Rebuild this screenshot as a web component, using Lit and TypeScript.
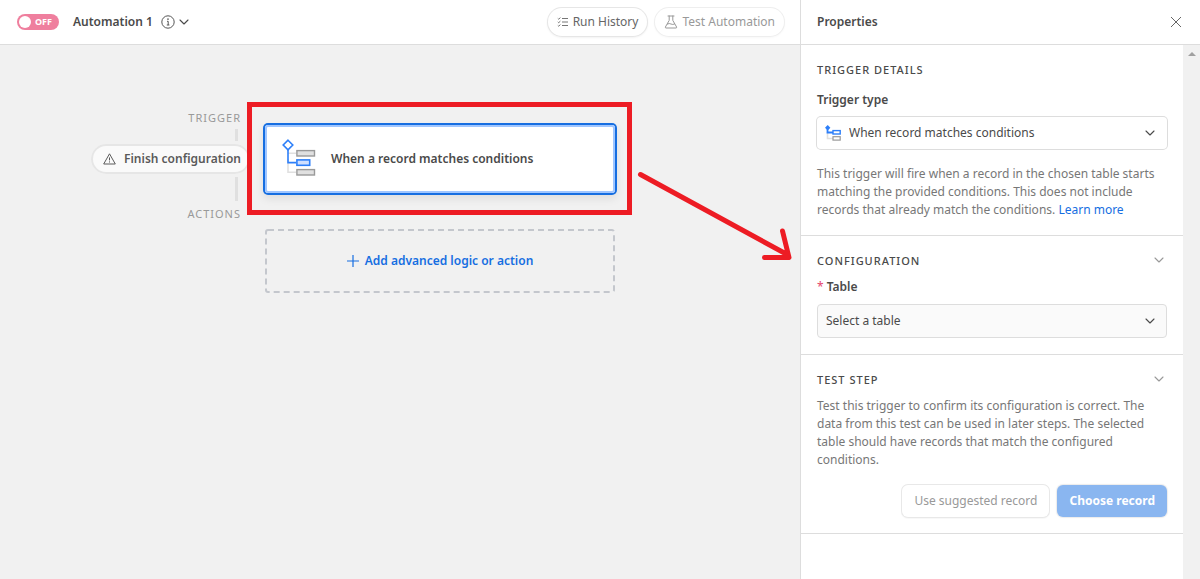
import { LitElement, html, css, svg } from "lit";
import { customElement, property, state } from "lit/decorators.js";

const chevron = html`<svg class="chevron" width="10" height="6" viewBox="0 0 10 6" fill="none" stroke="currentColor" stroke-width="1.1" stroke-linecap="round" stroke-linejoin="round" aria-hidden="true"><path d="M1 1l4 4 4-4" /></svg>`;

const matchIconLarge = svg`<svg width="36" height="40" viewBox="0 -0.3 36 40" fill="none" aria-hidden="true">
  <path d="M6 20V33H14M6 14H14" stroke="#e0e0e0" stroke-width="1.6" />
  <path d="M6 10V23.300H14" stroke="#2d7ff9" stroke-width="1.6" />
  <path d="M6 .9L10.800 5.700 6 10.500 1.200 5.700z" fill="#fff" stroke="#2d7ff9" stroke-width="1.6" />
  <rect x="14.900" y="11.300" width="17.600" height="5.400" fill="#e0e0e0" stroke="#999" stroke-width="1.4" />
  <rect x="14.900" y="20.600" width="12.800" height="5.400" fill="#cfdfff" stroke="#2d7ff9" stroke-width="1.6" />
  <rect x="14.900" y="30.300" width="17.600" height="5.400" fill="#e0e0e0" stroke="#999" stroke-width="1.4" />
</svg>`;

const matchIconSmall = svg`<svg width="16" height="16" viewBox="0 0 16 16" fill="none" aria-hidden="true">
  <path d="M2.5 7V13.5H8" stroke="#e0e0e0" stroke-width="1.6" />
  <path d="M2.5 3V7.5H8" stroke="#2d7ff9" stroke-width="1.8" />
  <path d="M2.7 0L5.4 2.7 2.7 5.400 0 2.7z" fill="#2d7ff9" />
  <rect x="8" y="5.6" width="7.2" height="3.4" fill="#fff" stroke="#2d7ff9" stroke-width="1.4" />
  <rect x="8" y="11.7" width="7.2" height="3.4" fill="#fff" stroke="#999" stroke-width="1.2" />
</svg>`;

const base = css`
  *, *::before, *::after { box-sizing: border-box; }
  :host {
    font-family: "Noto Sans", "Open Sans", sans-serif;
    font-size: 12px;
    line-height: 18px;
    color: #4a4a4a;
  }
  button, select {
    font: inherit;
    color: inherit;
    margin: 0;
    cursor: pointer;
  }
  svg { display: block; flex: none; }
  h1, h2, h3, p { margin: 0; font-size: inherit; }
`;

@customElement("automation-header")
class AutomationHeader extends LitElement {
  @state() private on = false;

  static styles = [base, css`
    :host {
      display: flex;
      align-items: center;
      justify-content: space-between;
      height: 45px;
      padding: 0 16px 0 17px;
      background: #fff;
      border-bottom: 1px solid #ddd;
    }
    .group { display: flex; align-items: center; }
    .toggle {
      display: flex;
      align-items: center;
      gap: 4px;
      width: 42px;
      height: 16px;
      padding: 0 2px;
      border: 0;
      border-radius: 8px;
      background: #ef7f9e;
      color: #fff;
      font-size: 9px;
      line-height: 16px;
      font-weight: 700;
    }
    .knob { width: 12px; height: 12px; border-radius: 50%; background: #fff; }
    .name { margin-left: 14px; font-weight: 600; }
    .info { margin-left: 8px; }
    .plain { display: flex; padding: 4px; border: 0; background: none; }
    .actions { gap: 8px; }
    .pill {
      display: flex;
      align-items: center;
      gap: 4px;
      height: 28px;
      padding: 0 9px;
      border: 0;
      border-radius: 14px;
      background: #fff;
      box-shadow: 0 0 0 1px #e6e6e6, 0 1px 2px 1px #0000000d;
      color: #666;
    }
    .pill:disabled { color: #999; cursor: default; box-shadow: 0 0 0 1px #eee, 0 1px 2px 1px #00000008; }
  `];

  render() {
    return html`
      <div class="group">
        <button class="toggle" role="switch" aria-checked=${this.on} aria-label="Automation status" @click=${() => (this.on = !this.on)}>
          <span class="knob"></span><span>${this.on ? "ON" : "OFF"}</span>
        </button>
        <h1 class="name">Automation 1</h1>
        <svg class="info" width="14" height="14" viewBox="0 0 14 14" fill="none" stroke="#555" aria-hidden="true">
          <circle cx="7" cy="7" r="6.2" /><path d="M6 6.3H7.2V10M5.8 10H8.4" /><circle cx="7" cy="4.1" r=".4" fill="#555" />
        </svg>
        <button class="plain" aria-label="Automation menu">${chevron}</button>
      </div>
      <div class="group actions">
        <button class="pill">
          <svg width="12" height="12" viewBox="0 0 12 12" fill="none" stroke="currentColor" stroke-width=".9" aria-hidden="true">
            <path d="M5 2.5H11M5 6H11M5 9.5H11M.8 2.4l.9.8L3.4 1.6M.8 5.9l.9.8 1.7-1.6M.8 9.4l.9.8 1.7-1.6" />
          </svg>
          Run History
        </button>
        <button class="pill" disabled>
          <svg width="14" height="14" viewBox="0 0 14 14" fill="none" stroke="currentColor" stroke-linejoin="round" stroke-linecap="round" aria-hidden="true">
            <path d="M4 1H10M5.2 1V5.4L1.4 12Q1.1 13 2 13H12Q12.9 13 12.6 12L8.8 5.4V1M3.4 9Q5.4 8 7 9T10.6 9" />
          </svg>
          Test Automation
        </button>
      </div>
    `;
  }
}

@customElement("automation-canvas")
class AutomationCanvas extends LitElement {
  static styles = [base, css`
    :host {
      display: grid;
      grid-template-columns: 1fr 350px 1fr;
      align-items: start;
      padding: 65px 0 0 80px;
      background: #f1f1f1;
    }
    .rail {
      display: flex;
      flex-direction: column;
      align-items: flex-end;
      gap: 3px;
      padding-right: 15px;
    }
    .label {
      margin-right: 9px;
      font-size: 11px;
      line-height: 16px;
      letter-spacing: 1px;
      color: #999;
    }
    .label:last-child { margin-top: 2px; }
    .line { width: 3px; height: 12px; margin-right: 12px; background: #e0e0e0; }
    .line.long { height: 24px; }
    .warning {
      display: flex;
      align-items: center;
      gap: 8px;
      height: 30px;
      padding: 0 9px 0 12px;
      border: 0;
      border-radius: 15px;
      background: #fafafa;
      box-shadow: 0 0 0 2px #e6e6e6 inset;
      color: #5a5a5a;
      font-weight: 600;
      white-space: nowrap;
    }
    .steps { display: grid; gap: 36px; padding-top: 15px; }
    .slot { position: relative; display: grid; }
    .card {
      display: flex;
      align-items: center;
      gap: 13px;
      height: 68px;
      padding: 0 17px;
      border: 0;
      border-radius: 3px;
      background: #fff;
      box-shadow: inset 0 0 0 2px #a0c6ff, 0 0 0 2px #166ee1, 0 4px 8px 2px #00000014;
      font-weight: 600;
    }
    .marker {
      position: absolute;
      inset: -23px -17px -22px -18px;
      border: 5px solid #ed1c24;
      pointer-events: none;
    }
    .arrow { position: absolute; left: 370px; top: 40px; pointer-events: none; }
    .add {
      position: relative;
      display: flex;
      align-items: center;
      justify-content: center;
      gap: 6px;
      height: 64px;
      padding: 0;
      border: 0;
      background: none;
      color: #166ee1;
      font-weight: 600;
    }
    .dashes { position: absolute; inset: 0; width: 100%; height: 100%; }
  `];

  render() {
    return html`
      <div class="rail">
        <span class="label">TRIGGER</span>
        <span class="line"></span>
        <button class="warning">
          <svg width="13" height="12" viewBox="0 0 13 12" fill="none" stroke="currentColor" stroke-linejoin="round" aria-hidden="true">
            <path d="M6.5 .8L12.3 11H.7zM6.5 4.4V7.4M6.5 8.4V9.5" />
          </svg>
          Finish configuration
        </button>
        <span class="line long"></span>
        <span class="label">ACTIONS</span>
      </div>
      <div class="steps">
        <div class="slot">
          <button class="card">${matchIconLarge}<span>When a record matches conditions</span></button>
          <div class="marker"></div>
          <svg class="arrow" width="164" height="104" viewBox="0 0 164 104" fill="none" stroke="#ed1c24" stroke-width="5" stroke-linecap="round" stroke-linejoin="round" aria-hidden="true">
            <path d="M5.500 9.500L153 90M147.500 66L154 92.500H129.500" />
          </svg>
        </div>
        <button class="add">
          <svg class="dashes" aria-hidden="true">
            <rect x="1" y="1" width="348" height="62" rx="2" fill="none" stroke="#c4c7cd" stroke-width="2" stroke-dasharray="6 4" />
          </svg>
          <svg width="12" height="12" viewBox="0 0 12 12" stroke="currentColor" stroke-width="1.2" aria-hidden="true"><path d="M6 0V12M0 6H12" /></svg>
          Add advanced logic or action
        </button>
      </div>
    `;
  }
}

@customElement("panel-section")
class PanelSection extends LitElement {
  @property() heading = "";
  @property({ type: Boolean }) collapsible = false;
  @state() private open = true;

  static styles = [base, css`
    :host { display: block; padding: 16px; border-bottom: 1px solid #ddd; }
    .head { display: flex; align-items: center; justify-content: space-between; }
    .title { font-size: 11px; font-weight: 500; letter-spacing: 1px; }
    .fold { display: flex; padding: 2px 3px 4px; border: 0; background: none; color: #999; }
  `];

  render() {
    return html`
      <div class="head">
        <h3 class="title">${this.heading}</h3>
        ${this.collapsible
          ? html`<button class="fold" aria-label="Toggle section" aria-expanded=${this.open} @click=${() => (this.open = !this.open)}>${chevron}</button>`
          : null}
      </div>
      ${this.open ? html`<slot></slot>` : null}
    `;
  }
}

@customElement("properties-panel")
class PropertiesPanel extends LitElement {
  static styles = [base, css`
    :host {
      display: flex;
      flex-direction: column;
      min-height: 0;
      background: #fff;
      border-left: 1px solid #ddd;
    }
    .top {
      display: flex;
      align-items: center;
      justify-content: space-between;
      height: 45px;
      padding: 0 14px 0 16px;
      border-bottom: 1px solid #ddd;
    }
    .title { font-weight: 600; }
    .close { display: flex; padding: 4px; border: 0; background: none; color: #666; }
    .body { display: flex; flex: 1; }
    .sections { flex: 1; min-width: 0; }
    .scroll { display: flex; justify-content: center; width: 17px; padding-top: 7px; background: #f1f1f1; }
    .label { display: block; margin: 8px 0; font-weight: 600; }
    .label.first { margin-top: 12px; }
    .required { margin-right: 3px; color: #e5446d; font-weight: 400; }
    .field { display: grid; align-items: center; }
    .field > * { grid-area: 1 / 1; }
    .field > svg { pointer-events: none; }
    .field .chevron { justify-self: end; margin-right: 12px; }
    .kind { margin-left: 8px; pointer-events: none; }
    .select {
      appearance: none;
      width: 100%;
      height: 34px;
      padding: 0 32px 0 8px;
      border: 1px solid #ddd;
      border-radius: 4px;
      background: #fafafa;
    }
    .select.outlined {
      height: 32px;
      padding-left: 32px;
      border: 0;
      background: #fff;
      box-shadow: 0 0 0 1px #ddd;
    }
    .text { color: #777; }
    .after-field { margin-top: 16px; }
    .after-head { margin-top: 8px; }
    .link { color: #166ee1; text-decoration: none; }
    .buttons { display: flex; justify-content: flex-end; gap: 8px; margin-top: 16px; }
    .button {
      height: 32px;
      padding: 0 12px;
      border: 0;
      border-radius: 6px;
      background: #fff;
      box-shadow: 0 0 0 1px #e8e8e8, 0 1px 1px 1px #00000008;
      color: #999;
      white-space: nowrap;
    }
    .button.primary {
      background: #8ab6f0;
      box-shadow: 0 0 1px 1px #00000014;
      color: #fff;
      font-weight: 700;
    }
  `];

  render() {
    return html`
      <div class="top">
        <h2 class="title">Properties</h2>
        <button class="close" aria-label="Close">
          <svg width="12" height="12" viewBox="0 0 12 12" stroke="currentColor" stroke-width="1" aria-hidden="true"><path d="M1 1L11 11M11 1L1 11" /></svg>
        </button>
      </div>
      <div class="body">
        <div class="sections">
          <panel-section heading="TRIGGER DETAILS">
            <label class="label first" for="type">Trigger type</label>
            <div class="field">
              <select class="select outlined" id="type"><option>When record matches conditions</option></select>
              <span class="kind">${matchIconSmall}</span>
              ${chevron}
            </div>
            <p class="text after-field">
              This trigger will fire when a record in the chosen table starts matching the provided conditions. This does not include records that already match the conditions. <a class="link" href="#learn">Learn more</a>
            </p>
          </panel-section>
          <panel-section heading="CONFIGURATION" collapsible>
            <label class="label" for="table"><span class="required">*</span>Table</label>
            <div class="field">
              <select class="select" id="table"><option>Select a table</option></select>
              ${chevron}
            </div>
          </panel-section>
          <panel-section heading="TEST STEP" collapsible>
            <p class="text after-head">
              Test this trigger to confirm its configuration is correct. The data from this test can be used in later steps. The selected table should have records that match the configured conditions.
            </p>
            <div class="buttons">
              <button class="button" disabled>Use suggested record</button>
              <button class="button primary" disabled>Choose record</button>
            </div>
          </panel-section>
        </div>
        <div class="scroll">
          <svg width="8" height="4" viewBox="0 0 8 4" fill="#a0a0a0" aria-hidden="true"><path d="M4 0L8 4H0z" /></svg>
        </div>
      </div>
    `;
  }
}

@customElement("app-root")
class AppRoot extends LitElement {
  static styles = [base, css`
    :host { display: grid; grid-template-columns: 1fr 400px; min-height: 100vh; }
    .main { display: grid; grid-template-rows: auto 1fr; }
  `];

  render() {
    return html`
      <div class="main">
        <automation-header></automation-header>
        <automation-canvas></automation-canvas>
      </div>
      <properties-panel></properties-panel>
    `;
  }
}
